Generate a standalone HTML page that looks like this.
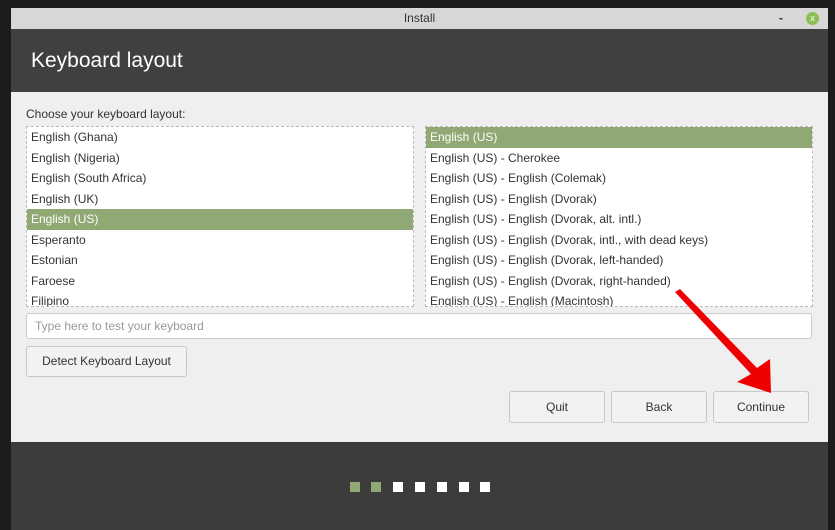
<!DOCTYPE html><html><head><style>
body{margin:0;width:835px;height:530px;background:#1c1c1c;position:relative;overflow:hidden;font-family:"Liberation Sans",sans-serif}
.win{position:absolute;left:11px;top:8px;width:817px;height:522px;background:#3c3c3c}
.tb{position:absolute;left:0;top:0;width:817px;height:21px;background:#d7d7d7;text-align:center;font-size:12px;line-height:21px;color:#333}
.hd{position:absolute;left:0;top:21px;width:817px;height:63px;background:#404040;color:#fff;font-size:21px;line-height:63px;padding-left:20px;box-sizing:border-box}
.ct{position:absolute;left:0;top:84px;width:817px;height:350px;background:#efefef}
.a{position:absolute}
.list{position:absolute;background:#fff;border:1px dashed #bbb;overflow:hidden;font-size:12px;color:#333}
.list div{height:20.5px;line-height:20px;padding-left:4px}
.sel{background:#8fa874;color:#fff}
.btn{position:absolute;border:1px solid #c8c8c8;border-radius:3px;background:#f2f2f2;font-size:12px;color:#333;text-align:center;box-sizing:border-box}
.dot{position:absolute;top:482px;width:10px;height:10px;background:#fff}
</style></head><body>
<div class="win">
<div class="tb">Install<span style="position:absolute;left:768px;top:0;font-weight:bold">-</span><span style="position:absolute;left:795px;top:4px;width:13px;height:13px;border-radius:50%;background:#8cbf56;color:#fff;font-size:9px;line-height:13px">x</span></div>
<div class="hd">Keyboard layout</div>
<div class="ct"></div>
</div>
<div class="a" style="left:26px;top:107px;font-size:12px;color:#333">Choose your keyboard layout:</div>
<div class="list" style="left:26px;top:126px;width:386px;height:179px">
<div>English (Ghana)</div><div>English (Nigeria)</div><div>English (South Africa)</div><div>English (UK)</div><div class="sel">English (US)</div><div>Esperanto</div><div>Estonian</div><div>Faroese</div><div>Filipino</div></div>
<div class="list" style="left:425px;top:126px;width:386px;height:179px">
<div class="sel">English (US)</div><div>English (US) - Cherokee</div><div>English (US) - English (Colemak)</div><div>English (US) - English (Dvorak)</div><div>English (US) - English (Dvorak, alt. intl.)</div><div>English (US) - English (Dvorak, intl., with dead keys)</div><div>English (US) - English (Dvorak, left-handed)</div><div>English (US) - English (Dvorak, right-handed)</div><div>English (US) - English (Macintosh)</div></div>
<div class="a" style="left:26px;top:313px;width:786px;height:26px;background:#fff;border:1px solid #ccc;border-radius:3px;box-sizing:border-box;font-size:12px;color:#999;line-height:24px;padding-left:8px">Type here to test your keyboard</div>
<div class="btn" style="left:26px;top:346px;width:161px;height:31px;line-height:29px">Detect Keyboard Layout</div>
<div class="btn" style="left:509px;top:391px;width:96px;height:32px;line-height:30px">Quit</div>
<div class="btn" style="left:611px;top:391px;width:96px;height:32px;line-height:30px">Back</div>
<div class="btn" style="left:713px;top:391px;width:96px;height:32px;line-height:30px">Continue</div>
<div class="dot" style="left:350px;background:#8fa874"></div><div class="dot" style="left:371px;background:#8fa874"></div><div class="dot" style="left:393px"></div><div class="dot" style="left:415px"></div><div class="dot" style="left:437px"></div><div class="dot" style="left:459px"></div><div class="dot" style="left:480px"></div>
<svg class="a" style="left:0;top:0" width="835" height="530"><path d="M675 292 L680 289 L757 368 L770 359 L771 393 L737 382 L751 374 Z" fill="#e00"/></svg>
</body></html>
